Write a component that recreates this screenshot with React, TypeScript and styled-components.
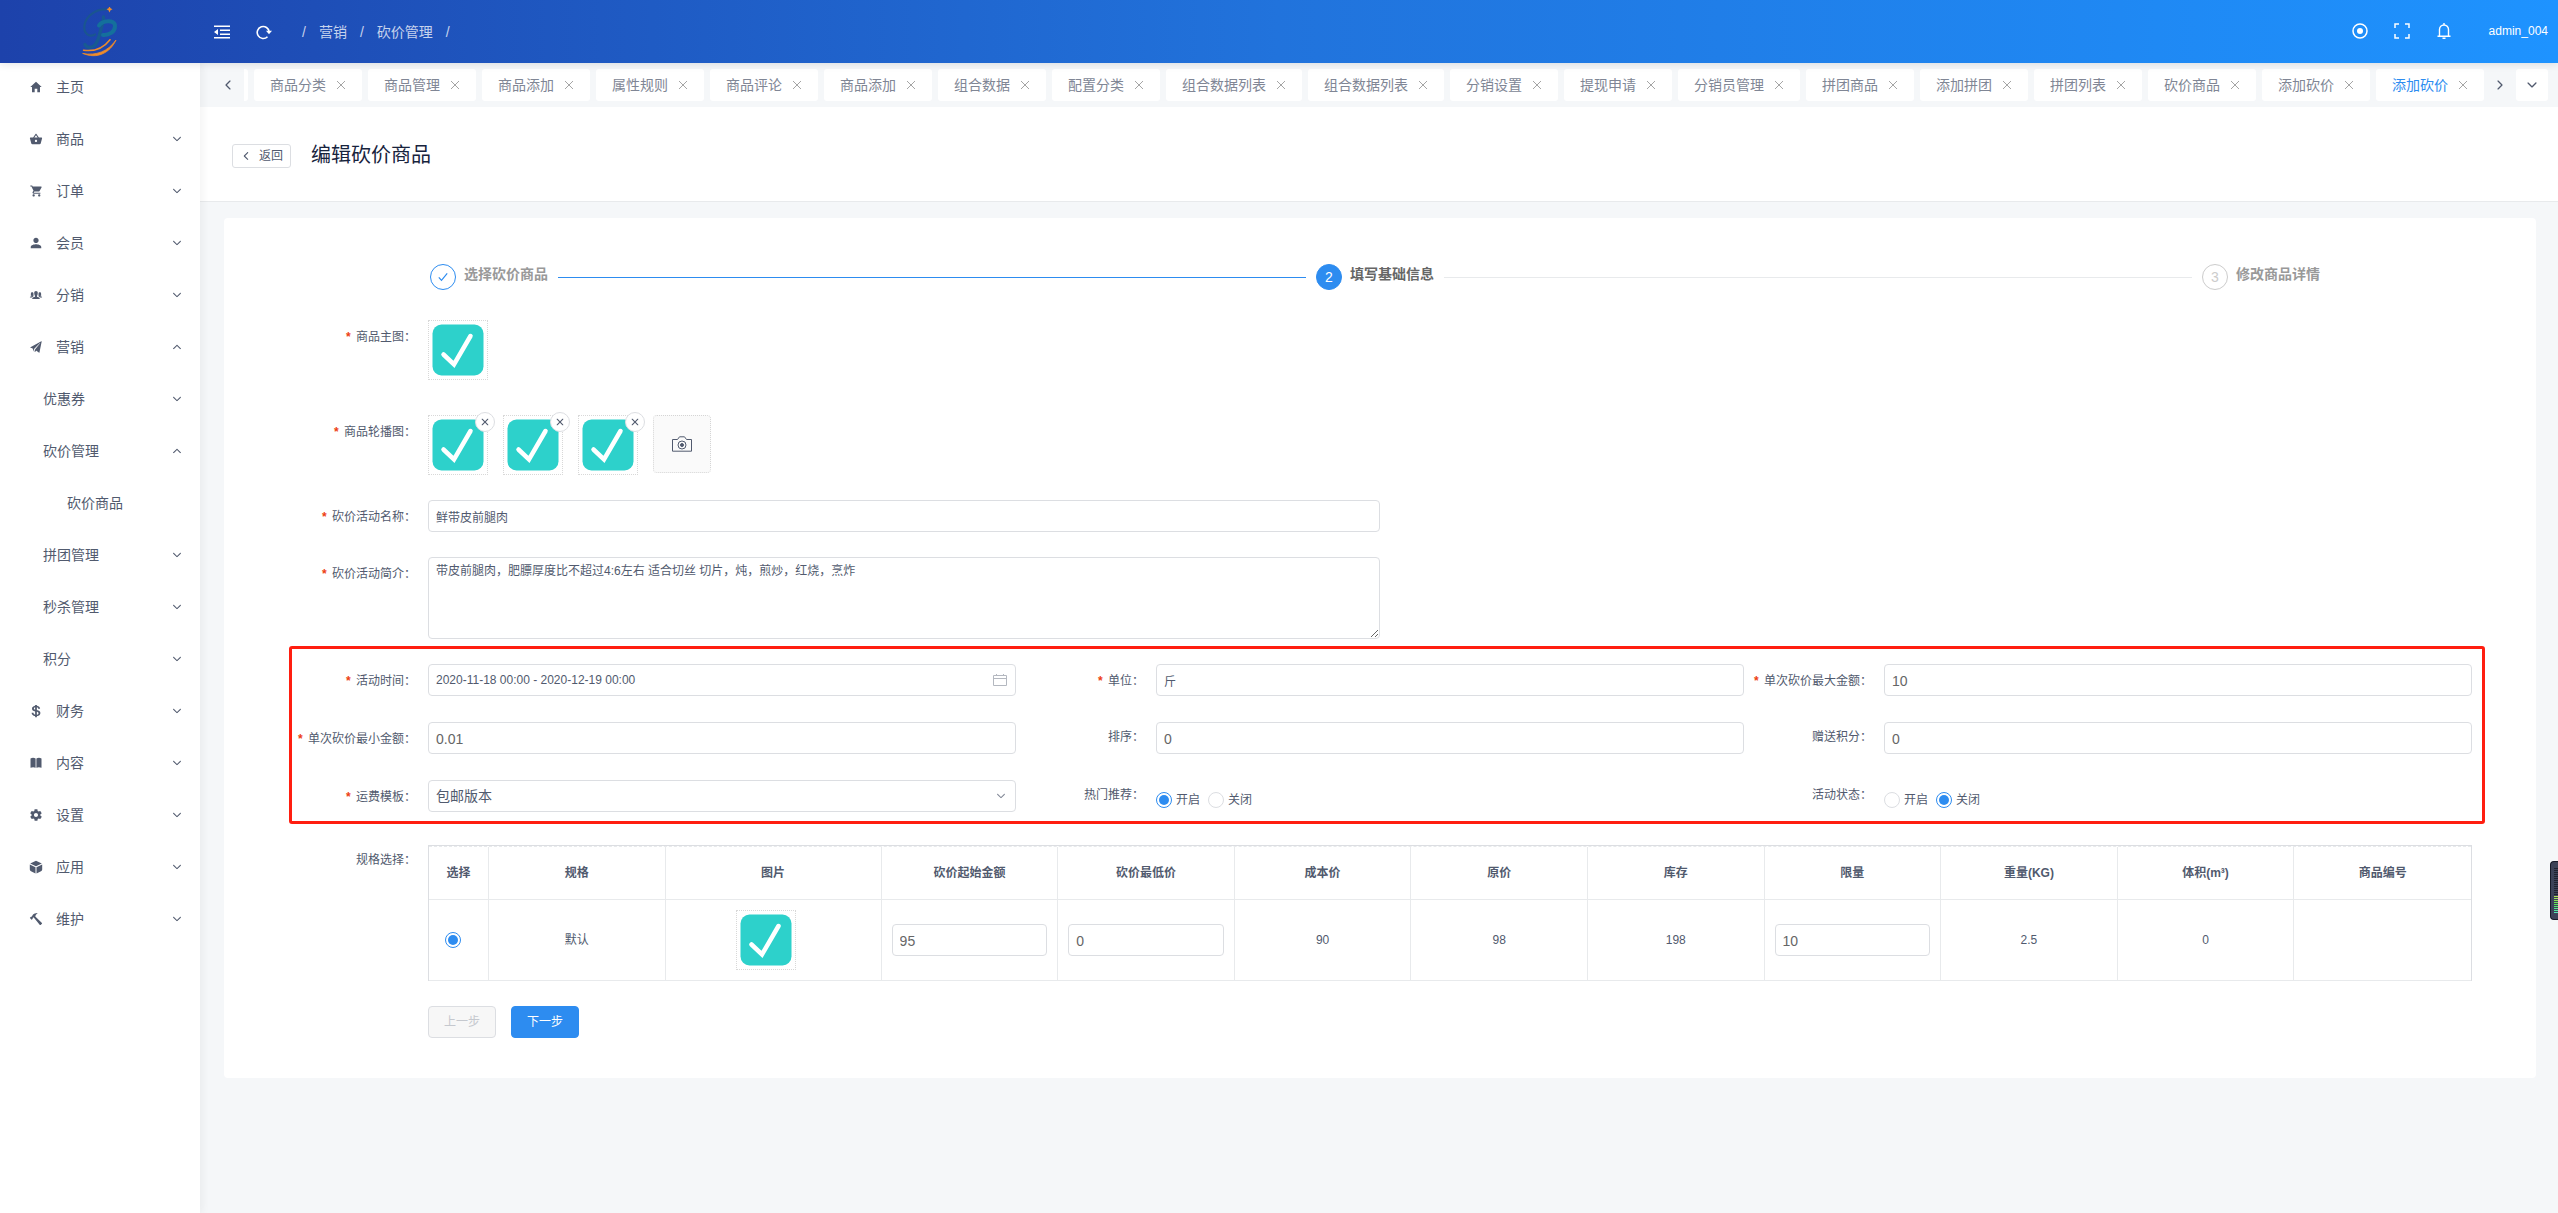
import React, { useState } from "react";
import styled, { createGlobalStyle } from "styled-components";
import {
  IoMdHome,
  IoMdBasket,
  IoMdCart,
  IoMdPerson,
  IoIosPeople,
  IoIosPaperPlane,
  IoLogoUsd,
  IoMdSettings,
  IoMdHammer,
  IoIosArrowDown,
  IoIosArrowUp,
  IoIosArrowBack,
  IoIosArrowForward,
  IoIosClose,
} from "react-icons/io";

const color = {
  primary: "#2d8cf0",
  text: "#515a6e",
  sub: "#808695",
  title: "#17233d",
  border: "#dcdee2",
  line: "#e8eaec",
  page: "#f5f7f9",
  danger: "#ed4014",
  teal: "#2dd1cb",
};

const GlobalStyle = createGlobalStyle`
  *, *::before, *::after { box-sizing: border-box; }
  body {
    margin: 0;
    background: ${color.page};
    color: ${color.text};
    font-family: "Liberation Sans", "Noto Sans CJK SC", sans-serif;
    font-size: 12px;
    line-height: 18px;
  }
  button, input, textarea, select { font: inherit; color: inherit; }
  button { padding: 0; border: 0; background: none; cursor: pointer; }
  a { color: inherit; text-decoration: none; }
  svg { display: block; flex: none; }
`;

/* ---------- header ---------- */

const Header = styled.header`
  position: relative;
  z-index: 3;
  display: flex;
  align-items: center;
  height: 63px;
  padding-right: 10px;
  color: #fff;
  background: linear-gradient(90deg, #1d42ab, #2173dc, #1e93ff);
  box-shadow: 0 1px 8px rgba(0, 21, 41, 0.12);
`;

const Brand = styled.a`
  display: flex;
  justify-content: center;
  width: 200px;
`;

const HeaderTools = styled.div`
  display: flex;
  align-items: center;
  gap: 26px;
  padding-left: 14px;
`;

const HeaderActions = styled(HeaderTools)`
  margin-left: auto;
  padding: 0 37px 2px 0;
`;

const Crumbs = styled.nav`
  display: flex;
  gap: 13px;
  padding: 0 0 0 30px;
  font-size: 14px;
  color: rgba(255, 255, 255, 0.75);
`;

const UserName = styled.button`
  padding-bottom: 2px;
`;

/* ---------- frame ---------- */

const Frame = styled.div`
  display: flex;
  min-height: calc(100vh - 63px);
`;

const Sidebar = styled.nav`
  position: relative;
  z-index: 2;
  display: flex;
  flex-direction: column;
  gap: 8px;
  flex: 0 0 200px;
  padding-top: 2px;
  background: #fff;
  box-shadow: 2px 0 8px rgba(29, 35, 41, 0.06);
`;

const MenuItem = styled.button<{ $level: number }>`
  display: flex;
  align-items: center;
  gap: 13px;
  height: 44px;
  padding: 0 17px 0 ${(p) => [29, 43, 67][p.$level]}px;
  font-size: 14px;
  text-align: left;
`;

const MenuText = styled.span`
  flex: 1;
`;

const Main = styled.main`
  flex: 1;
  min-width: 0;
`;

/* ---------- opened pages ---------- */

const TabBar = styled.div`
  display: flex;
  align-items: center;
  height: 44px;
  padding: 0 10px 0 12px;
`;

const TabArrow = styled.button`
  display: flex;
  align-items: center;
  justify-content: center;
  flex: 0 0 32px;
  height: 32px;
`;

const TabMenu = styled(TabArrow)`
  border-radius: 3px;
  background: #fff;
`;

const TabStrip = styled.div`
  display: flex;
  justify-content: flex-end;
  gap: 6px;
  flex: 1;
  min-width: 0;
  overflow: hidden;
`;

const Tab = styled.div<{ $active?: boolean }>`
  display: flex;
  align-items: center;
  gap: 10px;
  flex: none;
  height: 32px;
  min-width: 32px;
  padding: 0 16px;
  border-radius: 3px;
  background: #fff;
  font-size: 14px;
  color: ${(p) => (p.$active ? color.primary : color.sub)};
`;

const TabClose = styled.button`
  width: 10px;
  color: #a5a5a5;
`;

/* ---------- page title ---------- */

const PageHead = styled.div`
  display: flex;
  align-items: center;
  gap: 20px;
  height: 95px;
  padding-left: 32px;
  border-bottom: 1px solid ${color.line};
  background: #fff;
`;

const BackButton = styled.button`
  display: flex;
  align-items: center;
  gap: 7px;
  height: 24px;
  margin-top: 3px;
  padding: 0 7px;
  border: 1px solid ${color.border};
  border-radius: 3px;
`;

const Title = styled.h1`
  margin: 2px 0 0;
  font-size: 20px;
  font-weight: 400;
  line-height: 30px;
  color: ${color.title};
`;

const Card = styled.section`
  margin: 16px 22px 24px 24px;
  padding: 46px 64px 40px;
  border-radius: 4px;
  background: #fff;
`;

/* ---------- steps ---------- */

type StepState = "done" | "current" | "waiting";

const Steps = styled.ol`
  display: flex;
  margin: 0 152px 30px 142px;
  padding: 0;
  list-style: none;
`;

const Step = styled.li<{ $last?: boolean }>`
  display: flex;
  align-items: center;
  flex: ${(p) => (p.$last ? "none" : "1")};
`;

const StepMark = styled.span<{ $state: StepState }>`
  display: flex;
  align-items: center;
  justify-content: center;
  flex: none;
  width: 26px;
  height: 26px;
  margin-right: 8px;
  border: 1px solid ${(p) => (p.$state === "waiting" ? "#ccc" : color.primary)};
  border-radius: 50%;
  background: ${(p) => (p.$state === "current" ? color.primary : "#fff")};
  color: ${(p) => ({ done: color.primary, current: "#fff", waiting: "#ccc" })[p.$state]};
  font-size: 14px;
`;

const StepTitle = styled.strong<{ $state: StepState }>`
  padding-bottom: 6px;
  font-size: 14px;
  line-height: 20px;
  color: ${(p) => (p.$state === "current" ? "#666" : "#999")};
`;

const StepLine = styled.span<{ $done: boolean }>`
  flex: 1;
  height: 1px;
  margin: 0 10px;
  background: ${(p) => (p.$done ? color.primary : color.line)};
`;

/* ---------- form ---------- */

const Form = styled.form`
  display: flex;
  flex-direction: column;
  gap: 25px;
`;

const FieldRow = styled.div<{ $half?: boolean; $roomy?: boolean }>`
  display: flex;
  align-items: flex-start;
  width: ${(p) => (p.$half ? "50%" : "auto")};
  padding-bottom: ${(p) => (p.$roomy ? 10 : 0)}px;
`;

const FieldLabel = styled.label<{ $required?: boolean }>`
  flex: 0 0 140px;
  padding: ${(p) => (p.$required ? 11 : 9)}px 12px 0 0;
  line-height: 12px;
  text-align: right;
  white-space: nowrap;

  &::before {
    content: ${(p) => (p.$required ? '"*"' : "none")};
    margin-right: 4px;
    color: ${color.danger};
    font-family: "Liberation Mono", monospace;
    font-weight: 700;
  }
`;

const FieldBody = styled.div`
  flex: 1;
  min-width: 0;
`;

const TextInput = styled.input<{ $number?: boolean }>`
  display: block;
  width: 100%;
  height: 32px;
  padding: ${(p) => (p.$number ? "2px 7px 0" : "0 7px")};
  border: 1px solid ${color.border};
  border-radius: 4px;
  outline: none;
  background: #fff;
  font-size: ${(p) => (p.$number ? 14 : 12)}px;
  color: ${(p) => (p.$number ? "#666" : color.text)};
`;

const TextArea = styled.textarea`
  display: block;
  width: 100%;
  height: 82px;
  padding: 4px 7px;
  border: 1px solid ${color.border};
  border-radius: 4px;
  outline: none;
  resize: vertical;
`;

const InputWrap = styled.div`
  position: relative;
`;

const InputIcon = styled.span`
  position: absolute;
  top: 0;
  right: 9px;
  display: flex;
  align-items: center;
  height: 32px;
  color: ${color.sub};
  pointer-events: none;
`;

const Select = styled.select`
  display: block;
  width: 100%;
  height: 32px;
  padding: 0 24px 0 7px;
  border: 1px solid ${color.border};
  border-radius: 4px;
  outline: none;
  appearance: none;
  background: #fff;
  font-size: 14px;
`;

const Columns = styled.div`
  position: relative;
  display: grid;
  grid-template-columns: repeat(3, 1fr);
  row-gap: 26px;
  padding-bottom: 8px;
`;

const Highlight = styled.div`
  position: absolute;
  inset: -18px -13px -4px 1px;
  border: 3px solid #ff1e10;
  border-radius: 3px;
  pointer-events: none;
`;

const RadioGroup = styled.div`
  display: flex;
  gap: 8px;
  padding-top: 11px;
`;

const RadioLabel = styled.label`
  display: flex;
  align-items: center;
  gap: 4px;
`;

const Radio = styled.input`
  display: grid;
  place-items: center;
  width: 16px;
  height: 16px;
  margin: 0;
  border: 1px solid ${color.border};
  border-radius: 50%;
  appearance: none;
  background: #fff;

  &:checked {
    border-color: ${color.primary};
  }
  &:checked::before {
    content: "";
    width: 10px;
    height: 10px;
    border-radius: 50%;
    background: ${color.primary};
  }
`;

/* ---------- pictures ---------- */

const Gallery = styled.div`
  display: flex;
  gap: 15px;
`;

const ThumbBox = styled.div`
  position: relative;
  flex: none;
  width: 60px;
  height: 60px;
  padding: 3px;
  border: 1px dotted rgba(0, 0, 0, 0.15);
`;

const RemoveButton = styled.button`
  position: absolute;
  top: -4px;
  right: -8px;
  display: flex;
  align-items: center;
  justify-content: center;
  width: 20px;
  height: 20px;
  border: 1px solid ${color.border};
  border-radius: 50%;
  background: #fff;
`;

const UploadButton = styled.button`
  display: flex;
  align-items: center;
  justify-content: center;
  width: 58px;
  height: 58px;
  border: 1px dotted rgba(0, 0, 0, 0.15);
  border-radius: 4px;
  background: rgba(0, 0, 0, 0.02);
`;

/* ---------- table ---------- */

const TableFrame = styled.div`
  border: solid ${color.border};
  border-width: 1px 1px 0 1px;
`;

const Table = styled.table`
  width: 100%;
  border-top: 1px dashed ${color.line};
  border-spacing: 0;
  table-layout: fixed;
  text-align: center;

  th,
  td {
    padding: 0 10px;
    border-bottom: 1px solid ${color.line};
  }
  th:not(:last-child),
  td:not(:last-child) {
    border-right: 1px solid ${color.line};
  }
  th {
    height: 53px;
  }
  td {
    height: 81px;
  }
`;

const Col = styled.col<{ $width?: number }>`
  width: ${(p) => (p.$width ? `${p.$width}px` : "auto")};
`;

const CellContent = styled.div<{ $shift: number }>`
  display: flex;
  justify-content: center;
  padding-right: ${(p) => p.$shift}px;
`;

/* ---------- buttons ---------- */

const Buttons = styled.div`
  display: flex;
  gap: 15px;
  padding-left: 140px;
`;

const Button = styled.button<{ $primary?: boolean }>`
  height: 32px;
  padding: 0 15px;
  border: 1px solid ${(p) => (p.$primary ? color.primary : color.border)};
  border-radius: 4px;
  background: ${(p) => (p.$primary ? color.primary : "#f7f7f7")};
  color: ${(p) => (p.$primary ? "#fff" : "#c5c8ce")};
`;

/* ---------- edge meter ---------- */

const EdgeMeter = styled.aside`
  position: fixed;
  z-index: 5;
  top: 861px;
  right: 0;
  display: flex;
  flex-direction: column;
  gap: 1px;
  width: 8px;
  height: 59px;
  padding: 6px 0 0 3px;
  border: solid #171a28;
  border-width: 1px 0 1px 1px;
  border-radius: 4px 0 0 4px;
  background: #3c4257;
`;

const MeterBar = styled.i<{ $hue?: number }>`
  height: 1px;
  background: ${(p) => (p.$hue === undefined ? "#20222f" : `hsl(${p.$hue}, 75%, 62%)`)};
`;

/* ---------- drawings ---------- */

const Logo = () => (
  <svg width="36" height="50" viewBox="0 0 36 50" fill="none" strokeLinecap="round">
    <path d="M24 2.500C14 2 4 9 2.500 18c-1.200 8 4 13 10.500 9.500" stroke="#1a5590" strokeWidth="2.200" />
    <path d="M21.500 10c.5 2-1 6-2.500 12-2 8-3 13-6 16-3.500 3.500-8 3-10-.5" stroke="#175a92" strokeWidth="3.400" />
    <path d="M17 18.500c3-5 16-6.500 16 .5 0 6-6 9.500-12 9" stroke="#14709c" strokeWidth="4" />
    <path d="M27.500-1l1 2.300 2 1-2 1-1 2.200-1-2.200-2-1 2-1z" fill="#f08c2a" />
    <path d="M1.500 43.200c11 1.500 20-2 26.500-10.500" stroke="#f08c2a" strokeWidth="1.500" />
    <path d="M1 46.500c13 2.500 25-2 33-13.500-6 13-19 19.500-33 13.500z" fill="#f08c2a" stroke="#f08c2a" strokeWidth=".8" />
  </svg>
);

const FoldIcon = () => (
  <svg width="16" height="16" viewBox="0 0 16 16" fill="currentColor">
    <path d="M0 1.500h16V3H0zM6 5.500h10V7H6zM6 9.500h10V11H6zM0 13h16v1.500H0zM0 8l4-3v6z" />
  </svg>
);

const ReloadIcon = () => (
  <svg width="16" height="16" viewBox="0 0 16 16" fill="none" stroke="currentColor" strokeWidth="1.600">
    <path d="M11.500 12.700A6 6 0 1 1 13.200 8" />
    <path d="M10 6.800h6L13 10.300z" fill="currentColor" stroke="none" />
  </svg>
);

const RecordIcon = () => (
  <svg width="16" height="16" viewBox="0 0 16 16" fill="none" stroke="currentColor" strokeWidth="1.500">
    <circle cx="8" cy="8" r="7" />
    <circle cx="8" cy="8" r="3" fill="currentColor" stroke="none" />
  </svg>
);

const FullscreenIcon = () => (
  <svg width="16" height="16" viewBox="0 0 16 16" fill="none" stroke="currentColor" strokeWidth="1.500">
    <path d="M1 5V1h4M11 1h4v4M15 11v4h-4M5 15H1v-4" />
  </svg>
);

const BellIcon = () => (
  <svg width="16" height="18" viewBox="0 0 16 18" fill="none" stroke="currentColor" strokeWidth="1.400">
    <path d="M1.500 14.300h13M3.500 14V7.500a4.500 4.500 0 0 1 9 0V14M8 3V1M6.500 16.300h3" />
  </svg>
);

const BookIcon = () => (
  <svg width="14" height="14" viewBox="0 0 14 14" fill="currentColor">
    <path d="M1.500 2.500C3.300 1.600 5 1.700 6.600 2.500v9.300C5 11 3.300 11 1.500 11.800zM7.400 2.500c1.600-.8 3.300-.9 5.100 0v9.300c-1.800-.8-3.500-.8-5.100 0z" />
  </svg>
);

const CubeIcon = () => (
  <svg width="14" height="14" viewBox="0 0 14 14" fill="currentColor">
    <path d="M7 .8l5.800 2.700L7 6.300 1.200 3.500zM.8 4.500l5.700 2.700v6.200L2 11.200C1.200 10.800.8 10.300.8 9.500zM13.200 4.500L7.500 7.200v6.200l4.500-2.200c.8-.4 1.200-.9 1.200-1.700z" />
  </svg>
);

const CrossIcon = () => (
  <svg width="10" height="10" viewBox="0 0 10 10" fill="none" stroke="currentColor">
    <path d="M1 1l8 8M9 1L1 9" />
  </svg>
);

const CalendarIcon = () => (
  <svg width="14" height="14" viewBox="0 0 14 14" fill="none" stroke="#b4b8c0">
    <path d="M.5 2.500h13v10H.5zM.5 5.500h13M3.500 1v2M10.500 1v2" />
  </svg>
);

const CameraIcon = () => (
  <svg width="20" height="16" viewBox="0 0 20 16" fill="none" stroke="currentColor">
    <path d="M.5 3.500h5L7.500.8h5l2 2.700h5v11.700H.5z" strokeLinejoin="round" />
    <circle cx="10" cy="9" r="4" />
    <circle cx="10" cy="9" r="1.500" fill="currentColor" />
  </svg>
);

const StepCheck = () => (
  <svg width="12" height="12" viewBox="0 0 12 12" fill="none" stroke="currentColor" strokeWidth="1.200">
    <path d="M1.800 6.300l2.700 3 5.700-7" />
  </svg>
);

const ProductPicture = () => (
  <svg width="52" height="52" viewBox="0 0 52 52" fill="none">
    <rect x=".5" y=".5" width="51" height="51" rx="9" fill={color.teal} />
    <path d="M11.500 30.500l10.500 10L38.500 12" stroke="#fff" strokeWidth="4.500" strokeLinecap="round" />
  </svg>
);

const Thumb = ({ onRemove }: { onRemove?: () => void }) => (
  <ThumbBox>
    <ProductPicture />
    {onRemove && (
      <RemoveButton type="button" aria-label="删除" onClick={onRemove}>
        <IoIosClose size={18} />
      </RemoveButton>
    )}
  </ThumbBox>
);

/* ---------- data ---------- */

type Entry = { text: string; level?: number; icon?: React.ReactNode; open?: boolean; leaf?: boolean };

const menu: Entry[] = [
  { text: "主页", icon: <IoMdHome size={14} />, leaf: true },
  { text: "商品", icon: <IoMdBasket size={14} /> },
  { text: "订单", icon: <IoMdCart size={14} /> },
  { text: "会员", icon: <IoMdPerson size={14} /> },
  { text: "分销", icon: <IoIosPeople size={14} /> },
  { text: "营销", icon: <IoIosPaperPlane size={14} />, open: true },
  { text: "优惠券", level: 1 },
  { text: "砍价管理", level: 1, open: true },
  { text: "砍价商品", level: 2, leaf: true },
  { text: "拼团管理", level: 1 },
  { text: "秒杀管理", level: 1 },
  { text: "积分", level: 1 },
  { text: "财务", icon: <IoLogoUsd size={14} /> },
  { text: "内容", icon: <BookIcon /> },
  { text: "设置", icon: <IoMdSettings size={14} /> },
  { text: "应用", icon: <CubeIcon /> },
  { text: "维护", icon: <IoMdHammer size={14} /> },
];

const tabs = [
  "商品分类", "商品管理", "商品添加", "属性规则", "商品评论", "商品添加", "组合数据", "配置分类",
  "组合数据列表", "组合数据列表", "分销设置", "提现申请", "分销员管理", "拼团商品", "添加拼团",
  "拼团列表", "砍价商品", "添加砍价", "添加砍价",
];

const steps: { title: string; state: StepState }[] = [
  { title: "选择砍价商品", state: "done" },
  { title: "填写基础信息", state: "current" },
  { title: "修改商品详情", state: "waiting" },
];

const headings = [
  "选择", "规格", "图片", "砍价起始金额", "砍价最低价", "成本价", "原价", "库存", "限量",
  "重量(KG)", "体积(m³)", "商品编号",
];

type FieldProps = {
  label: string;
  id?: string;
  required?: boolean;
  half?: boolean;
  roomy?: boolean;
  children: React.ReactNode;
};

const Field = ({ label, id, required, half, roomy, children }: FieldProps) => (
  <FieldRow $half={half} $roomy={roomy}>
    <FieldLabel as={id ? "label" : "span"} htmlFor={id} $required={required} lang="zh-CN">
      {label}：
    </FieldLabel>
    <FieldBody>{children}</FieldBody>
  </FieldRow>
);

const Switcher = ({ name, initial }: { name: string; initial: string }) => {
  const [value, setValue] = useState(initial);
  return (
    <RadioGroup role="radiogroup">
      {["开启", "关闭"].map((option) => (
        <RadioLabel key={option}>
          <Radio type="radio" name={name} checked={value === option} onChange={() => setValue(option)} />
          {option}
        </RadioLabel>
      ))}
    </RadioGroup>
  );
};

export default function App() {
  const [pictures, setPictures] = useState([1, 2, 3]);

  return (
    <>
      <GlobalStyle />
      <Header>
        <Brand href="#" aria-label="主页">
          <Logo />
        </Brand>
        <HeaderTools>
          <button type="button" aria-label="收起菜单"><FoldIcon /></button>
          <button type="button" aria-label="刷新"><ReloadIcon /></button>
        </HeaderTools>
        <Crumbs>
          <span>/</span>
          <a href="#">营销</a>
          <span>/</span>
          <a href="#">砍价管理</a>
          <span>/</span>
        </Crumbs>
        <HeaderActions>
          <button type="button" aria-label="记录"><RecordIcon /></button>
          <button type="button" aria-label="全屏"><FullscreenIcon /></button>
          <button type="button" aria-label="通知"><BellIcon /></button>
        </HeaderActions>
        <UserName type="button">admin_004</UserName>
      </Header>

      <Frame>
        <Sidebar>
          {menu.map((entry) => (
            <MenuItem key={entry.text} type="button" $level={entry.level ?? 0}>
              {entry.icon}
              <MenuText>{entry.text}</MenuText>
              {!entry.leaf && (entry.open ? <IoIosArrowUp size={12} /> : <IoIosArrowDown size={12} />)}
            </MenuItem>
          ))}
        </Sidebar>

        <Main>
          <TabBar>
            <TabArrow type="button" aria-label="向左"><IoIosArrowBack size={14} /></TabArrow>
            <TabStrip>
              <Tab />
              {tabs.map((tab, index) => (
                <Tab key={index} $active={index === tabs.length - 1}>
                  <a href="#">{tab}</a>
                  <TabClose type="button" aria-label="关闭"><CrossIcon /></TabClose>
                </Tab>
              ))}
            </TabStrip>
            <TabArrow type="button" aria-label="向右"><IoIosArrowForward size={14} /></TabArrow>
            <TabMenu type="button" aria-label="更多"><IoIosArrowDown size={14} /></TabMenu>
          </TabBar>

          <PageHead>
            <BackButton type="button">
              <IoIosArrowBack size={12} />
              返回
            </BackButton>
            <Title>编辑砍价商品</Title>
          </PageHead>

          <Card>
            <Steps>
              {steps.map((step, index) => (
                <Step key={step.title} $last={index === 2}>
                  <StepMark $state={step.state}>
                    {step.state === "done" ? <StepCheck /> : index + 1}
                  </StepMark>
                  <StepTitle $state={step.state}>{step.title}</StepTitle>
                  {index < 2 && <StepLine $done={step.state === "done"} />}
                </Step>
              ))}
            </Steps>

            <Form onSubmit={(event) => event.preventDefault()}>
              <Field label="商品主图" required roomy>
                <Gallery><Thumb /></Gallery>
              </Field>
              <Field label="商品轮播图" required>
                <Gallery>
                  {pictures.map((n) => (
                    <Thumb key={n} onRemove={() => setPictures(pictures.filter((p) => p !== n))} />
                  ))}
                  <UploadButton type="button" aria-label="上传图片"><CameraIcon /></UploadButton>
                </Gallery>
              </Field>
              <Field label="砍价活动名称" id="title" required half>
                <TextInput id="title" defaultValue="鲜带皮前腿肉" />
              </Field>
              <Field label="砍价活动简介" id="info" required half>
                <TextArea
                  id="info"
                  defaultValue="带皮前腿肉，肥膘厚度比不超过4:6左右 适合切丝 切片，炖，煎炒，红烧，烹炸"
                />
              </Field>

              <Columns>
                <Field label="活动时间" id="period" required>
                  <InputWrap>
                    <TextInput id="period" defaultValue="2020-11-18 00:00 - 2020-12-19 00:00" />
                    <InputIcon><CalendarIcon /></InputIcon>
                  </InputWrap>
                </Field>
                <Field label="单位" id="unit" required>
                  <TextInput id="unit" defaultValue="斤" />
                </Field>
                <Field label="单次砍价最大金额" id="max" required>
                  <TextInput id="max" $number defaultValue="10" />
                </Field>
                <Field label="单次砍价最小金额" id="min" required>
                  <TextInput id="min" $number defaultValue="0.01" />
                </Field>
                <Field label="排序" id="sort">
                  <TextInput id="sort" $number defaultValue="0" />
                </Field>
                <Field label="赠送积分" id="points">
                  <TextInput id="points" $number defaultValue="0" />
                </Field>
                <Field label="运费模板" id="freight" required>
                  <InputWrap>
                    <Select id="freight" defaultValue="包邮版本">
                      <option>包邮版本</option>
                    </Select>
                    <InputIcon><IoIosArrowDown size={12} /></InputIcon>
                  </InputWrap>
                </Field>
                <Field label="热门推荐">
                  <Switcher name="hot" initial="开启" />
                </Field>
                <Field label="活动状态">
                  <Switcher name="status" initial="关闭" />
                </Field>
                <Highlight />
              </Columns>

              <Field label="规格选择">
                <TableFrame>
                  <Table>
                    <colgroup>
                      {headings.map((heading, index) => (
                        <Col key={heading} $width={[60, undefined, 216][index]} />
                      ))}
                    </colgroup>
                    <thead>
                      <tr>
                        {headings.map((heading) => (
                          <th key={heading} scope="col">{heading}</th>
                        ))}
                      </tr>
                    </thead>
                    <tbody>
                      <tr>
                        <td>
                          <CellContent $shift={11}>
                            <Radio type="radio" name="spec" aria-label="默认" defaultChecked />
                          </CellContent>
                        </td>
                        <td>默认</td>
                        <td>
                          <CellContent $shift={15}><Thumb /></CellContent>
                        </td>
                        <td><TextInput $number aria-label="砍价起始金额" defaultValue="95" /></td>
                        <td><TextInput $number aria-label="砍价最低价" defaultValue="0" /></td>
                        <td>90</td>
                        <td>98</td>
                        <td>198</td>
                        <td><TextInput $number aria-label="限量" defaultValue="10" /></td>
                        <td>2.5</td>
                        <td>0</td>
                        <td />
                      </tr>
                    </tbody>
                  </Table>
                </TableFrame>
              </Field>

              <Buttons>
                <Button type="button" disabled>上一步</Button>
                <Button type="submit" $primary>下一步</Button>
              </Buttons>
            </Form>
          </Card>
        </Main>
      </Frame>

      <EdgeMeter aria-hidden="true">
        {Array.from({ length: 23 }, (_, i) => (
          <MeterBar key={i} $hue={i < 14 ? undefined : 80 + (i - 14) * 10} />
        ))}
      </EdgeMeter>
    </>
  );
}
